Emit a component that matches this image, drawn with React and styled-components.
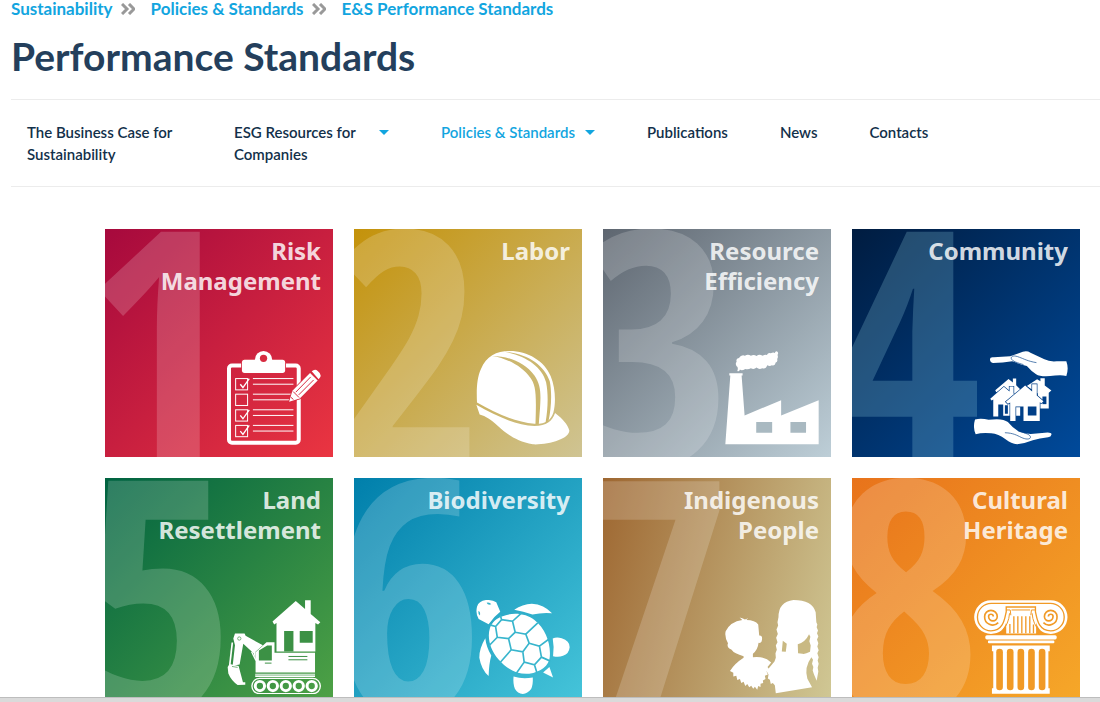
import React from 'react';
import styled, { createGlobalStyle } from 'styled-components';

const ClipboardIcon = ({ cut }) => (
    <Icon viewBox="381 386 283 283" aria-hidden="true">
        <rect x="387" y="430" width="210" height="232" rx="9" fill="none" stroke="#fff" strokeWidth="12" />
        <rect x="426" y="412" width="130" height="40" rx="8" stroke={cut} strokeWidth="5" paintOrder="stroke" />
        <circle cx="491" cy="412" r="26" />
        <circle cx="491" cy="408" r="11" fill={cut} />
        <g fill="none" stroke="#fff" strokeWidth="3">
            {[469, 516, 563, 610].map((y) => (
                <rect key={y} x="407" y={y} width="36" height="34" />
            ))}
            <path d="M459 469H581M459 486H581M459 516H581M459 533H568M459 563H581M459 580H581M459 610H581M459 627H581" />
        </g>
        <path d="M421 486l8 10l19-27M421 580l8 10l19-27M421 627l8 10l19-27" fill="none" stroke="#fff" strokeWidth="4" />
        <path d="M568 539L578 506L631 452L654 475L600 529Z" stroke={cut} strokeWidth="5" paintOrder="stroke" />
        <path d="M636 447Q646 438 654 446Q666 455 662 464L657 471Z" />
        <path d="M588 510L633 464M597 518L642 473M580 508L598 526M573 525L581 532" stroke={cut} strokeWidth="3" fill="none" />
    </Icon>
);

const HelmetIcon = ({ cut }) => (
    <Icon viewBox="379 386 283 283" aria-hidden="true">
        <path d="M382 541C380 500 382 465 394 440C410 402 440 386 480 386C535 386 585 416 604 462C618 497 620 540 612 571C604 596 588 606 555 605C500 600 440 575 382 541Z" />
        <path d="M427 401C475 408 520 434 542 466C560 490 561 515 558 607L568 607C575 520 578 495 555 460C525 420 480 402 427 401Z" fill={cut} />
        <path d="M464 388C530 400 578 434 590 480C597 515 596 560 588 604L597 598C606 560 608 510 601 477C585 430 535 394 464 388Z" fill={cut} />
        <path d="M380 548C440 583 500 609 555 612C592 612 608 598 617 573C640 590 655 608 660 625C661 650 600 669 550 667C500 657 471 636 445 612C425 592 408 582 390 577Z" />
    </Icon>
);

const FactoryIcon = ({ cut }) => (
    <Icon viewBox="383 386 283 283" aria-hidden="true">
        <path d="M384 667L399 460H396V453H436V460H433L442 580L552 534V580L665 534V667Z" />
        <path d="M477 600H525V632H477ZM580 600H627V632H580Z" fill={cut} />
        <path d="M420 446Q424 435 418 432Q413 424 418 418Q415 408 425 407Q432 396 443 400Q452 395 461 400Q470 396 478 401Q486 394 496 400Q504 396 509 398Q513 390 521 393Q528 389 533 392Q535 385 541 388Q545 393 541 398Q544 404 540 410Q543 418 535 421Q534 431 524 429Q518 434 510 429Q506 442 495 438Q486 443 478 436Q470 443 461 438Q452 443 444 440Q434 446 428 442Q426 450 420 446Z" />
    </Icon>
);

const CommunityIcon = ({ cut }) => (
    <Icon viewBox="13 17 283 283" aria-hidden="true">
        <path d="M61 42Q61 34 73 36L122 33L160 19Q173 15 183 22L225 42Q240 50 262 48Q277 47 291 48Q299 70 291 92Q275 88 257 91Q215 97 200 87Q185 77 172 62Q155 58 128 48Q100 53 70 53Q61 51 61 42Z" />
        <path d="M201 52C175 48 162 40 150 36C133 29 125 32 125 39C127 48 145 53 162 58" fill="none" stroke={cut} strokeWidth="2" />
        <path d="M77 135L117 101L130 112V100H140V120L152 132V150H87V138L80 141Z" />
        <path d="M172 122L203 102L213 108V99H226V121L246 136L238 143V190H205V145Z" />
        <path d="M219 154H231V177H219Z" fill={cut} />
        <g stroke={cut} strokeWidth="4" paintOrder="stroke">
            <path d="M62 161L103 125L120 139V124H132V145L152 165V212H101V178H86V214H71V163L66 166Z" />
            <path d="M109 170L167 121L188 139V117H202V151L222 168L216 174L211 171V228H162V184H138V228H122V172L115 176Z" />
        </g>
        <path d="M175 184H201V211H175ZM106 180H115V206H106Z" fill={cut} />
        <path d="M16 223Q35 219 57 224Q100 218 115 231Q132 252 150 260Q164 266 184 267L235 262Q248 262 246 269Q245 276 236 277Q210 280 190 286Q165 296 143 298Q125 296 108 283Q86 267 65 265Q37 262 18 268Q9 248 16 223Z" />
        <path d="M106 263C132 264 142 271 155 277C172 285 184 283 183 275C180 266 160 263 145 257" fill="none" stroke={cut} strokeWidth="2" />
    </Icon>
);

const ExcavatorIcon = ({ cut }) => (
    <Icon viewBox="18 14 283 283" aria-hidden="true">
        <path d="M155 79L225 17L253 41V15H270V56L299 81L292 88L284 83V169H167V83L160 88Z" />
        <path d="M190 107H218V169H190ZM237 107H276V143H237Z" fill={cut} />
        <path d="M104 232V171L137 141H161V173H283V232Z" />
        <path d="M114 196V166L139 151H153V196Z" fill={cut} />
        <path d="M203 184H260M203 194H260M132 204H152" stroke={cut} strokeWidth="3" />
        <path d="M103 236H283V246H103Z" />
        <path d="M103 240H283" stroke={cut} strokeWidth="2" />
        <path d="M42 115H71L74 122L126 150L104 170V196L98 174L67 146L56 208L35 212L42 150L37 130Z" />
        <path d="M92 170L105 196" stroke="#fff" strokeWidth="4" />
        <circle cx="55" cy="130" r="5" fill="none" stroke={cut} strokeWidth="2" />
        <path d="M34 142L26 212" stroke="#fff" strokeWidth="5" />
        <path d="M20 216L26 207L53 213L66 262L73 262V269L50 270Q30 255 22 235Z" />
        <path d="M33 214L50 217" stroke={cut} strokeWidth="2" />
        <rect x="93" y="250" width="206" height="46" rx="23" fill="none" stroke="#fff" strokeWidth="4" />
        {[117, 156, 195, 234, 273].map((x) => (
            <circle key={x} cx={x} cy="273" r="14" fill="none" stroke="#fff" strokeWidth="9" />
        ))}
    </Icon>
);

const TurtleIcon = ({ cut }) => (
    <Icon viewBox="380 388 283 283" aria-hidden="true">
        <path d="M383 408Q388 391 410 388Q430 387 441 395L453 423Q433 438 418 461L388 445Q378 430 383 408Z" />
        <path d="M387 421Q394 422 392 435Q386 431 387 421ZM412 396Q422 394 426 401Q416 405 412 396Z" fill={cut} />
        <path d="M458 438C490 423 530 428 556 448C590 475 606 520 602 560C600 585 575 604 540 610C505 613 473 596 448 567C422 538 413 500 422 472C430 453 442 444 458 438Z" />
        <path d="M439 468L457 447L490 452L498 485L478 504L444 500ZM498 485L530 491L540 518L521 544L486 538L478 504M540 518L571 527L577 560L556 583L525 575L521 544M439 468L422 463M457 447L453 434M490 452L516 428M530 491L566 457M571 527L602 504M577 560L604 572M556 583L564 609M525 575L501 609M486 538L452 577M444 500L420 525" fill="none" stroke={cut} strokeWidth="5" />
        <path d="M495 417Q520 400 548 399Q585 401 609 428Q580 425 550 432Q522 421 495 417Z" />
        <path d="M408 503Q389 535 390 562Q396 598 418 617Q419 580 426 555Q411 530 408 503Z" />
        <path d="M611 504Q622 499 638 503Q662 510 662 530Q660 550 642 556Q628 561 612 557Q616 530 611 504Z" />
        <path d="M601 590L612 621L582 606Z" />
        <path d="M493 618Q520 627 551 621Q552 643 546 656Q535 670 521 671Q505 669 497 655Q491 640 493 618Z" />
    </Icon>
);

const PeopleIcon = ({ cut }) => (
    <Icon viewBox="384 388 283 283" aria-hidden="true">
        <path d="M436 448L428 441L438 444L444 447L454 443L448 448Q475 448 484 462L487 495Q498 494 495 509Q494 518 485 517Q483 538 468 550V560Q503 556 523 576L512 590L518 598L509 603L513 612L504 616L506 626L498 630L499 638L491 640L491 650L484 647L481 658L474 649L469 655L463 646L457 651L451 641L445 647L440 634L433 638L429 626L421 629L418 616L409 618L409 607L399 602Q412 580 440 562V557Q412 550 403 537Q388 532 393 518Q382 498 386 482Q400 453 436 448Z" />
        <path d="M545 440Q545 393 590 388Q647 388 657 425L659 455L662 462L660 470L664 480L661 488L665 498L661 507L665 518L662 528L666 539L662 548L666 560L663 570L666 580L663 592L665 603L660 631L652 612L648 600L650 590L646 580L649 568L644 560Q622 590 632 625L646 651L537 669L534 645L528 638L522 641L519 628L513 624L515 612L509 602L533 573L537 562L536 548L540 538L537 525L542 515L538 502L543 490L539 477L544 465L542 455Z" />
        <path d="M558 511Q568 518 570 520L567 544L555 543ZM603 521Q626 515 637 491L641 499L638 512L642 525L640 544Q625 552 617 550L604 548Z" fill={cut} />
    </Icon>
);

const ColumnIcon = ({ cut }) => (
    <Icon viewBox="387 388 283 283" aria-hidden="true">
        <path d="M438 389H618A50 50 0 0 1 618 490C592 490 580 476 574 456V489H484V456C478 476 464 490 438 490A50 50 0 0 1 438 389Z" />
        <g fill="none" stroke={cut} strokeWidth="4">
            <path d="M440 398H616A41 41 0 0 1 618 481C577 481 576 436 572 424V409H484V424C480 436 479 481 438 481A41 41 0 0 1 440 398Z" />
            <path d="M484 418H496L498 434M572 418H560L558 434M500 418H556" strokeWidth="3" />
            <path d="M494 428Q492 460 470 484M562 428Q564 460 586 484" strokeWidth="3" />
            <path d="M495 460V488M507 437V488M519 437V488M531 437V488M543 437V488M555 437V488M566 462V488" strokeWidth="4" />
            <path d="M445 438A7 7 0 0 0 431 438A13 13 0 0 0 457 438A19 19 0 0 0 419 438A24 24 0 0 0 460 456" strokeWidth="5" />
            <path d="M611 438A7 7 0 0 1 625 438A13 13 0 0 1 599 438A19 19 0 0 1 637 438A24 24 0 0 1 596 456" strokeWidth="5" />
        </g>
        <rect x="421" y="494" width="215" height="13" rx="5" />
        <rect x="429" y="510" width="200" height="8" rx="3" />
        <path d="M441 525H615V542H611V654H615V670H441V654H445V542H441Z" />
        {[454, 486, 518, 550, 582].map((x) => (
            <rect key={x} x={x} y="535" width="20" height="125" rx="10" fill={cut} />
        ))}
    </Icon>
);

const crumbs = ['Sustainability', 'Policies & Standards', 'E&S Performance Standards'];

const navItems = [
    { label: 'The Business Case for Sustainability' },
    { label: 'ESG Resources for Companies', menu: true },
    { label: 'Policies & Standards', menu: true, active: true },
    { label: 'Publications' },
    { label: 'News' },
    { label: 'Contacts' },
];

const standards = [
    { title: 'Risk Management', from: '#a6093d', to: '#ea3541', cut: '#d72b40', icon: ClipboardIcon },
    { title: 'Labor', from: '#c4920a', to: '#cfc493', cut: '#ccb76f', icon: HelmetIcon },
    { title: 'Resource Efficiency', from: '#5e6670', to: '#bdced7', cut: '#a9b9c1', icon: FactoryIcon },
    { title: 'Community', from: '#001c40', to: '#004a9b', cut: '#003f88', tint: '#8ed0e040', icon: CommunityIcon },
    { title: 'Land Resettlement', from: '#006341', to: '#4fa245', cut: '#3c9145', icon: ExcavatorIcon },
    { title: 'Biodiversity', from: '#007fab', to: '#46c5da', cut: '#38b5cd', icon: TurtleIcon },
    { title: 'Indigenous People', from: '#9e6731', to: '#d0c895', angle: 105, cut: '#c9b983', icon: PeopleIcon },
    { title: 'Cultural Heritage', from: '#e8731b', to: '#f6a829', cut: '#f19a26', icon: ColumnIcon },
];

const App = () => {
    return (
        <Page>
            <GlobalStyle />
            <Content>
                <Header>
                    <Breadcrumbs aria-label="Breadcrumb">
                        {crumbs.map((crumb, i) => (
                            <React.Fragment key={crumb}>
                                {i > 0 && (
                                    <Chevrons viewBox="0 0 14 12" aria-hidden="true">
                                        <path d="M1 1l5 5l-5 5M8 1l5 5l-5 5" />
                                    </Chevrons>
                                )}
                                <CrumbLink href="#">{crumb}</CrumbLink>
                            </React.Fragment>
                        ))}
                    </Breadcrumbs>
                    <PageTitle>Performance Standards</PageTitle>
                    <NavBar>
                        {navItems.map((item) =>
                            item.menu ? (
                                <NavButton key={item.label} type="button" $active={item.active}>
                                    <span>{item.label}</span>
                                    <Caret />
                                </NavButton>
                            ) : (
                                <NavLink key={item.label} href="#">{item.label}</NavLink>
                            )
                        )}
                    </NavBar>
                </Header>
                <TileGrid>
                    {standards.map((item, i) => (
                        <Tile key={item.title} href="#" $from={item.from} $to={item.to} $angle={item.angle}>
                            <Numeral $tint={item.tint}>{i + 1}</Numeral>
                            <TileTitle>{item.title}</TileTitle>
                            <item.icon cut={item.cut} />
                        </Tile>
                    ))}
                </TileGrid>
            </Content>
            <BottomBar />
        </Page>
    );
};

export default App;

const GlobalStyle = createGlobalStyle`
body {
    margin: 0;
    background: #fff;
    font-family: Lato, 'Open Sans', sans-serif;
}
`

const Page = styled.div`
display: flex;
flex-direction: column;
height: 100vh;
overflow: hidden;
`

const Content = styled.main`
flex: 1;
min-height: 0;
overflow: hidden;
`

const Header = styled.header`
padding-left: 11px;
`

const Breadcrumbs = styled.nav`
display: flex;
align-items: center;
height: 18px;
`

const CrumbLink = styled.a`
color: #12a5df;
font-size: 17px;
font-weight: 700;
line-height: 18px;
text-decoration: none;
`

const Chevrons = styled.svg`
width: 14px;
height: 12px;
margin: 0 16px 0 8px;
fill: none;
stroke: #999;
stroke-width: 3;
`

const PageTitle = styled.h1`
margin: 14px 0 19px;
color: #243f5c;
font-size: 39px;
font-weight: 700;
line-height: 48px;
`

const NavBar = styled.nav`
display: flex;
align-items: flex-start;
gap: 52px;
padding: 21px 16px;
border-top: 1px solid #ececec;
border-bottom: 1px solid #ececec;
`

const NavLink = styled.a`
max-width: 155px;
color: #12304a;
font-size: 15px;
font-weight: 600;
line-height: 22px;
text-decoration: none;
`

const NavButton = styled.button`
display: flex;
align-items: flex-start;
justify-content: space-between;
gap: 10px;
max-width: 155px;
padding: 0;
border: 0;
background: none;
color: ${(props) => (props.$active ? '#12a5df' : '#12304a')};
font-family: inherit;
font-size: 15px;
font-weight: 600;
line-height: 22px;
text-align: left;
`

const Caret = styled.i`
flex: none;
margin-top: 9px;
border: 5px solid transparent;
border-top-color: #12a5df;
border-bottom: 0;
`

const TileGrid = styled.section`
display: grid;
grid-template-columns: repeat(4, 1fr);
gap: 21px;
padding: 42px 20px 42px 105px;
`

const Tile = styled.a`
position: relative;
display: flex;
flex-direction: column;
align-items: flex-end;
justify-content: space-between;
box-sizing: border-box;
aspect-ratio: 1;
padding: 7px 12px 12px;
overflow: hidden;
background: linear-gradient(${(props) => props.$angle || 135}deg, ${(props) => props.$from}, ${(props) => props.$to});
text-decoration: none;
`

const Numeral = styled.span`
position: absolute;
top: 0;
left: -22px;
color: ${(props) => props.$tint || '#ffffff2e'};
font-family: 'Liberation Sans Narrow', 'Open Sans Condensed', 'Roboto Condensed', Roboto, sans-serif;
font-size: 328px;
font-weight: 700;
line-height: 220px;
`

const TileTitle = styled.h2`
position: relative;
max-width: 180px;
margin: 0;
color: #ffffffd6;
font-family: 'Noto Sans', 'Open Sans', sans-serif;
font-size: 24px;
font-weight: 700;
line-height: 30px;
text-align: right;
`

const Icon = styled.svg`
position: relative;
width: 94px;
height: 94px;
fill: #fff;
`

const BottomBar = styled.footer`
flex: none;
height: 4px;
border-top: 1px solid #bdbdbd;
background: #dadada;
`
